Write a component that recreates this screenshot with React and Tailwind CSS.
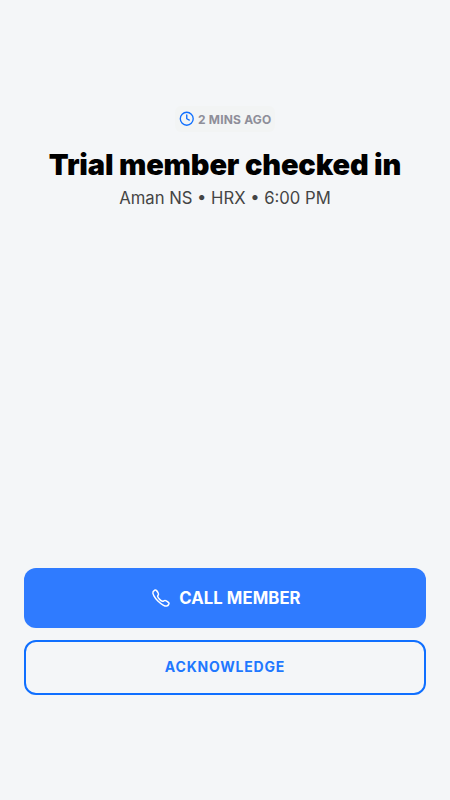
import { Clock } from "lucide-react";
import { IoCallOutline } from "react-icons/io5";

export default function App() {
  return (
    <div className="flex h-[800px] w-[450px] flex-col justify-between bg-[#f4f6f8] px-6 pt-[106px] pb-[105px] font-['Inter',sans-serif]">
      <div className="flex flex-col items-center">
        <div className="flex h-[26px] items-center gap-1 rounded-md bg-[#f2f4f4] px-1">
          <Clock size={15.5} strokeWidth={2.1} className="text-[#0f6fff]" />
          <span className="pt-px text-[12px] font-bold tracking-[0.18px] text-[#8e8e99]">2 MINS AGO</span>
        </div>
        <h1 className="mt-4 text-[29px] leading-[34px] font-black tracking-[-0.15px] whitespace-nowrap text-black">
          Trial member checked in
        </h1>
        <p className="mt-1 text-[16.65px] leading-6 text-[#444]">Aman NS • HRX • 6:00 PM</p>
      </div>
      <div className="flex flex-col gap-3">
        <button className="flex h-[60px] items-center justify-center gap-2 rounded-xl bg-[#2f7bff] pl-0.5 text-[16.7px] font-bold text-white">
          <IoCallOutline size={20} className="[&_path]:[stroke-width:38px]" />
          <span className="pt-px tracking-[0.07px]">CALL MEMBER</span>
        </button>
        <button className="h-[55px] rounded-xl border-2 border-[#0f6fff] pb-[3px] text-[14px] font-bold tracking-[0.8px] text-[#1f78ff]">
          ACKNOWLEDGE
        </button>
      </div>
    </div>
  );
}
